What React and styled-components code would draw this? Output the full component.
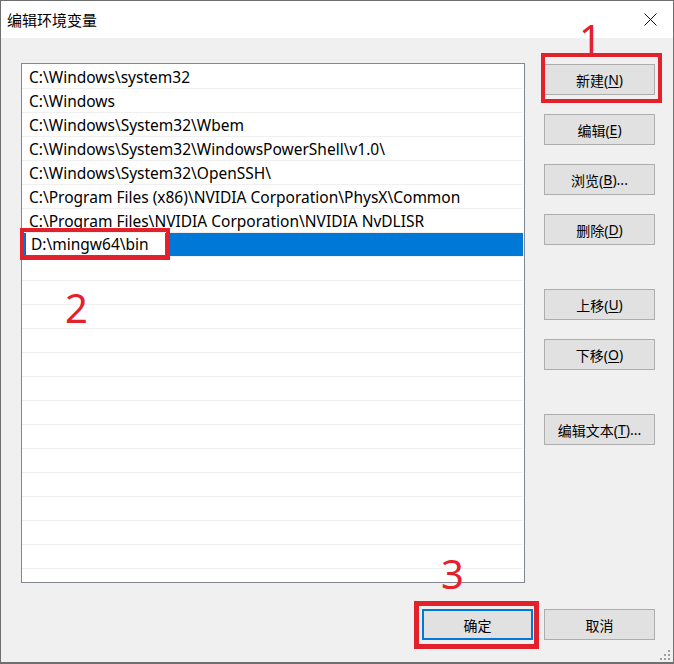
import React from 'react';
import styled, { createGlobalStyle } from 'styled-components';

const GlobalStyle = createGlobalStyle`
  html, body {
    margin: 0;
    padding: 0;
    background: #ffffff;
  }
  body {
    font-family: "Noto Sans", "Noto Sans CJK SC", sans-serif;
  }
`;

const Window = styled.div`
  position: relative;
  width: 674px;
  height: 664px;
  box-sizing: border-box;
  border: 1px solid #6f6f6f;
  border-bottom-width: 2px;
  display: flex;
  flex-direction: column;
  background: #f0f0f0;
  overflow: hidden;
`;

const TitleBar = styled.div`
  height: 37px;
  background: #ffffff;
  display: flex;
  align-items: center;
  justify-content: space-between;
  padding-left: 6px;
`;

const Title = styled.span`
  font-family: "Noto Sans CJK SC", sans-serif;
  font-size: 15px;
  color: #000;
`;

const CloseBox = styled.div`
  width: 46px;
  height: 37px;
  display: flex;
  align-items: center;
  justify-content: center;
`;

const Body = styled.div`
  flex: 1;
  display: flex;
  flex-direction: column;
  padding: 25px 18px 0 20px;
`;

const Content = styled.div`
  display: flex;
  gap: 19px;
`;

const ListBox = styled.div`
  width: 504px;
  height: 520px;
  box-sizing: border-box;
  border: 1px solid #828790;
  background: #ffffff;
  padding-top: 1px;
  overflow: hidden;
`;

const Row = styled.div`
  height: 24px;
  box-sizing: border-box;
  border-bottom: 1px solid #f0f0f0;
  display: flex;
  align-items: center;
  padding-left: ${p => (p.$selected ? '3px' : '7px')};
  margin-right: 1px;
  background: ${p => (p.$selected ? '#0078d7' : 'transparent')};
  font-size: 15.5px;
  color: #000;
  white-space: nowrap;
`;

const EditField = styled.div`
  width: 140px;
  height: 22px;
  box-sizing: border-box;
  background: #ffffff;
  display: flex;
  align-items: center;
  padding-left: 5px;
  border-left: 1px solid #555;
  align-self: flex-start;
`;

const ButtonColumn = styled.div`
  display: flex;
  flex-direction: column;
  gap: 19px;
  padding-top: 1px;
`;

const Button = styled.div`
  width: 111px;
  height: 31px;
  box-sizing: border-box;
  margin-top: ${p => p.$mt || 0}px;
  border: ${p => (p.$default ? '2px solid #0078d7' : '1px solid #adadad')};
  background: #e1e1e1;
  display: flex;
  align-items: center;
  justify-content: center;
  font-family: "Noto Sans", "Noto Sans CJK SC", sans-serif;
  font-size: 14px;
  color: #000;

  u {
    text-underline-offset: 2px;
  }
`;

const Footer = styled.div`
  display: flex;
  justify-content: flex-end;
  gap: 11px;
  margin-top: 26px;
`;

const Mark = styled.div`
  position: absolute;
  left: ${p => p.$x}px;
  top: ${p => p.$y}px;
  width: ${p => p.$w}px;
  height: ${p => p.$h}px;
  box-sizing: border-box;
  border: ${p => p.$t || 4}px solid #e3212a;
  pointer-events: none;
`;

const Num = styled.div`
  position: absolute;
  left: ${p => p.$x}px;
  top: ${p => p.$y}px;
  font-family: "Noto Sans", sans-serif;
  font-size: 40px;
  line-height: 40px;
  color: #e3212a;
`;

const Grip = styled.svg`
  position: absolute;
  right: 2px;
  bottom: 1px;
`;

const paths = [
  'C:\\Windows\\system32',
  'C:\\Windows',
  'C:\\Windows\\System32\\Wbem',
  'C:\\Windows\\System32\\WindowsPowerShell\\v1.0\\',
  'C:\\Windows\\System32\\OpenSSH\\',
  'C:\\Program Files (x86)\\NVIDIA Corporation\\PhysX\\Common',
  'C:\\Program Files\\NVIDIA Corporation\\NVIDIA NvDLISR',
];

export default function App() {
  const rows = [];
  for (let i = 0; i < 21; i++) {
    if (i < paths.length) rows.push(<Row key={i}>{paths[i]}</Row>);
    else if (i === paths.length)
      rows.push(
        <Row key={i} $selected>
          <EditField>D:\mingw64\bin</EditField>
        </Row>
      );
    else rows.push(<Row key={i} />);
  }

  return (
    <>
      <GlobalStyle />
      <Window>
        <TitleBar>
          <Title>编辑环境变量</Title>
          <CloseBox>
            <svg width="13" height="13" viewBox="0 0 13 13">
              <path d="M0.5 0.5 L12.5 12.5 M12.5 0.5 L0.5 12.5" stroke="#111" strokeWidth="1" />
            </svg>
          </CloseBox>
        </TitleBar>
        <Body>
          <Content>
            <ListBox>{rows}</ListBox>
            <ButtonColumn>
              <Button>新建(<u>N</u>)</Button>
              <Button>编辑(<u>E</u>)</Button>
              <Button>浏览(<u>B</u>)...</Button>
              <Button>删除(<u>D</u>)</Button>
              <Button $mt={25}>上移(<u>U</u>)</Button>
              <Button>下移(<u>O</u>)</Button>
              <Button $mt={25}>编辑文本(<u>T</u>)...</Button>
            </ButtonColumn>
          </Content>
          <Footer>
            <Button $default>确定</Button>
            <Button>取消</Button>
          </Footer>
        </Body>

        <Mark $x={540} $y={52} $w={121} $h={50} />
        <Mark $x={19} $y={227} $w={150} $h={32} />
        <Mark $x={413} $y={600} $w={125} $h={48} $t={5} />
        <Num $x={578} $y={18}>1</Num>
        <Num $x={64} $y={287}>2</Num>
        <Num $x={440} $y={553}>3</Num>

        <Grip width="12" height="12" viewBox="0 0 12 12">
          <g fill="#a0a0a0">
            <rect x="9" y="1" width="2" height="2" />
            <rect x="5" y="5" width="2" height="2" />
            <rect x="9" y="5" width="2" height="2" />
            <rect x="1" y="9" width="2" height="2" />
            <rect x="5" y="9" width="2" height="2" />
            <rect x="9" y="9" width="2" height="2" />
          </g>
        </Grip>
      </Window>
    </>
  );
}
